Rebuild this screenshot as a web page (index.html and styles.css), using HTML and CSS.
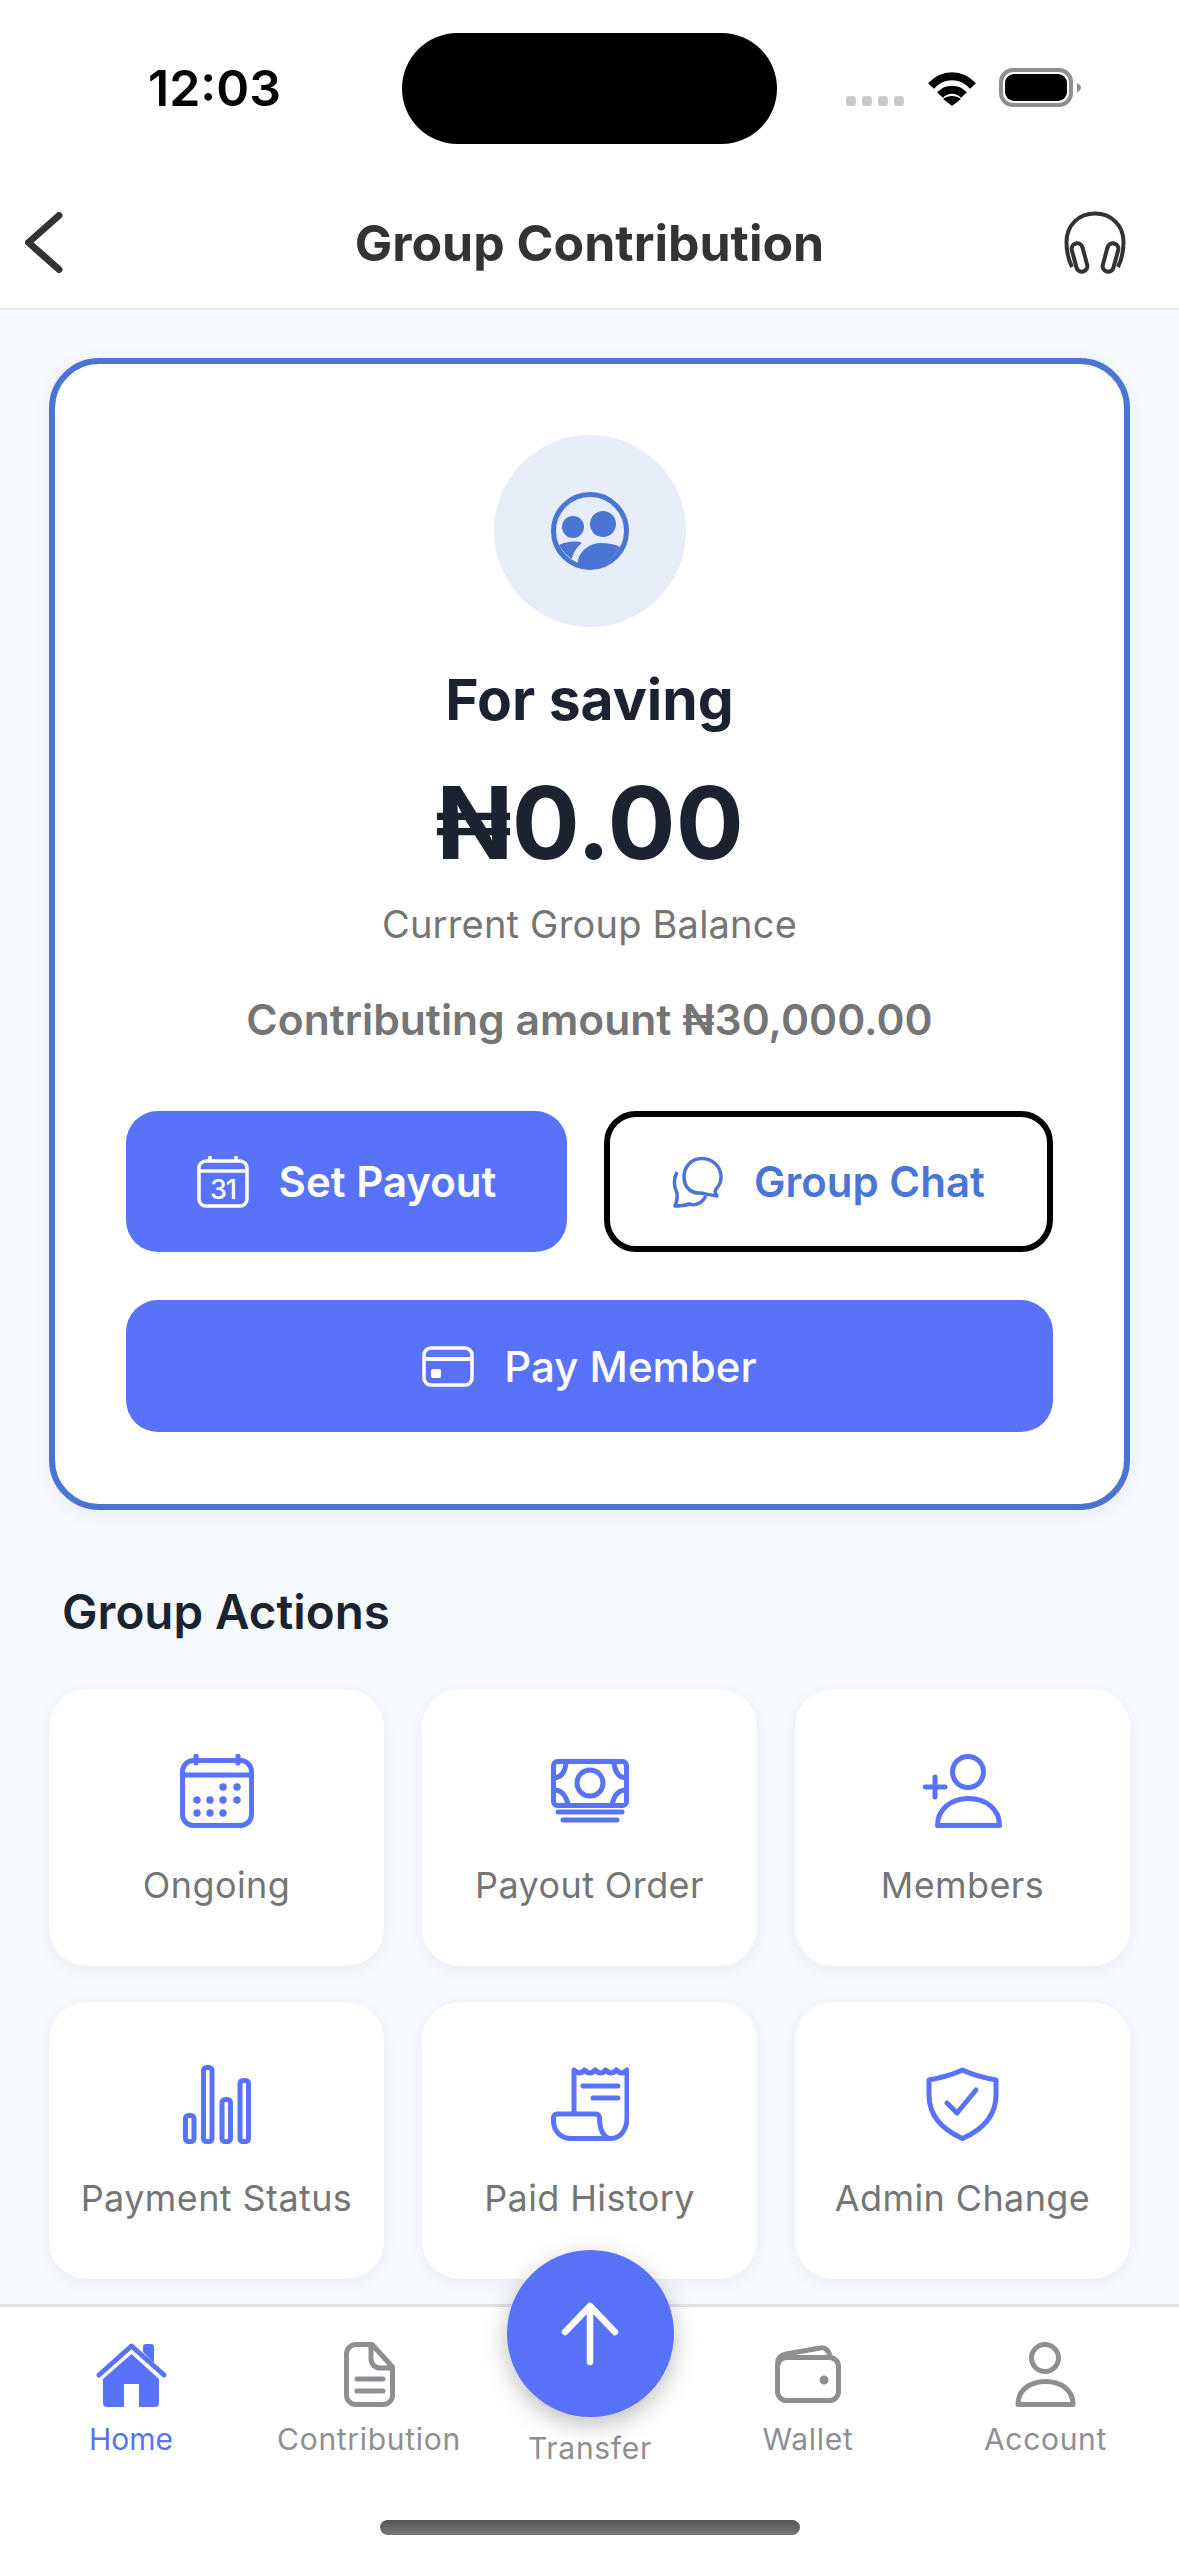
FILE: index.html
```html
<!DOCTYPE html>
<html>
<head>
    <title>Group Contribution</title>
    <link rel="stylesheet" href="styles.css">
</head>
<body>
    <div class="page">
        <div class="status">
            <span class="time">12:03</span>
            <div class="island"></div>
            <svg class="status-icons" width="236" height="39" viewBox="0 0 236 39">
                <g fill="#c9c9c9">
                    <rect x="0" y="28" width="10" height="10" rx="3"/>
                    <rect x="16" y="28" width="10" height="10" rx="3"/>
                    <rect x="32" y="28" width="10" height="10" rx="3"/>
                    <rect x="48" y="28" width="10" height="10" rx="3"/>
                </g>
                <g transform="translate(81 0)">
                    <path d="M4 18C16 5 34 5 46 18" fill="none" stroke="#000" stroke-width="8"/>
                    <path d="M13 27C20 20 30 20 37 27" fill="none" stroke="#000" stroke-width="8"/>
                    <path d="M25 38L16 31C21 27 29 27 34 31Z" fill="#000"/>
                </g>
                <rect x="155" y="2" width="70" height="35" rx="12" fill="none" stroke="#8e8e8e" stroke-width="4"/>
                <rect x="159" y="6" width="62" height="27" rx="9" fill="#000"/>
                <path d="M231 15L234 17Q236 19.5 234 22L231 25Z" fill="#8e8e8e"/>
            </svg>
        </div>

        <header class="topbar">
            <svg class="back" width="38" height="61" viewBox="0 0 38 61">
                <path d="M34 3.500L3.500 30.500L34 57.500" fill="none" stroke="#333" stroke-width="7" stroke-linecap="round" stroke-linejoin="round"/>
            </svg>
            <h1>Group Contribution</h1>
            <svg class="support" width="62" height="63" viewBox="0 0 62 63" fill="none" stroke="#333" stroke-width="4">
                <path d="M8 56C3 46 2.500 38 2.500 31C2.500 14 15 2.500 31 2.500S59.500 14 59.500 31C59.500 38 59 46 54 56"/>
                <rect x="10" y="32" width="11" height="29" rx="5.500" transform="rotate(-15 15.500 46.500)"/>
                <rect x="41" y="32" width="11" height="29" rx="5.500" transform="rotate(15 46.500 46.500)"/>
            </svg>
        </header>

        <main class="content">
            <section class="balance-card">
                <div class="group-avatar">
                    <svg width="78" height="78" viewBox="0 0 78 78" fill="#4a75d4">
                        <circle cx="39" cy="39" r="36.500" fill="none" stroke="#4a75d4" stroke-width="5"/>
                        <circle cx="22" cy="35" r="11"/>
                        <circle cx="52" cy="32" r="13"/>
                        <path d="M27 68C30 57 40 51 50 51C57 51 63 52 69 55A37 37 0 0 1 27 73Z"/>
                        <path d="M8 53C14 50 25 48 31 51C26 55 22 60 21 67A37 37 0 0 1 8 53Z"/>
                    </svg>
                </div>
                <h2 class="group-name">For saving</h2>
                <div class="amount">₦0.00</div>
                <p class="amount-label">Current Group Balance</p>
                <p class="contributing">Contributing amount ₦30,000.00</p>

                <div class="btn-row">
                    <a class="btn btn-primary">
                        <svg width="52" height="52" viewBox="0 0 52 52" fill="none" stroke="#fff" stroke-width="3.500">
                            <rect x="2" y="5" width="48" height="45" rx="7"/>
                            <path d="M2 15H50M13 0V6M39 0V6"/>
                            <text class="cal-day" x="26" y="43" text-anchor="middle">31</text>
                        </svg>
                        <span>Set Payout</span>
                    </a>
                    <a class="btn btn-outline">
                        <svg width="52" height="52" viewBox="0 0 52 52" fill="none" stroke="#4a75d4" stroke-width="3.500" stroke-linejoin="round">
                            <path d="M30 2.500C19 2.500 12 11 12 21C12 31 19 38 29 37C33 38 37 38.500 45 40C42.500 36 43 35 44 33C47 30 49 26 49 21C49 11 41 2.500 30 2.500Z"/>
                            <path d="M5 16C2 22 1.500 30 5 37C5.500 42 5 46 3 50C9 50 13 49.500 17 48C24 50 30 47 34 40"/>
                        </svg>
                        <span>Group Chat</span>
                    </a>
                </div>
                <a class="btn btn-primary btn-wide">
                    <svg width="52" height="41" viewBox="0 0 52 41" fill="none" stroke="#fff" stroke-width="3.500">
                        <rect x="2" y="2" width="48" height="37" rx="7"/>
                        <path d="M2 13H50" stroke-width="4"/>
                        <rect x="9" y="23" width="10" height="9" rx="2" fill="#fff" stroke="none"/>
                    </svg>
                    <span>Pay Member</span>
                </a>
            </section>

            <h3 class="section-title">Group Actions</h3>

            <div class="actions">
                <div class="action">
                    <div class="action-icon">
                        <svg width="74" height="74" viewBox="0 0 74 74" fill="none" stroke="#5872fa" stroke-width="5">
                            <rect x="2.500" y="6.500" width="69" height="65" rx="11"/>
                            <path d="M2.500 21H71.500"/>
                            <path d="M16 2V9M58 2V9" stroke-linecap="round"/>
                            <g fill="#5872fa" stroke="none">
                                <circle cx="43" cy="33" r="3.700"/><circle cx="57" cy="33" r="3.700"/>
                                <circle cx="17" cy="46" r="3.700"/><circle cx="30" cy="46" r="3.700"/><circle cx="43" cy="46" r="3.700"/><circle cx="57" cy="46" r="3.700"/>
                                <circle cx="17" cy="59" r="3.700"/><circle cx="30" cy="59" r="3.700"/><circle cx="43" cy="59" r="3.700"/>
                            </g>
                        </svg>
                    </div>
                    <span>Ongoing</span>
                </div>
                <div class="action">
                    <div class="action-icon">
                        <svg width="78" height="64" viewBox="0 0 78 64" fill="none" stroke="#5872fa" stroke-width="5" stroke-linecap="round">
                            <rect x="2.500" y="2.500" width="73" height="44" rx="4"/>
                            <circle cx="39" cy="24" r="13"/>
                            <path d="M3 19Q14 18 15 3M75 19Q64 18 63 3M3 31Q14 31 17 46M75 31Q64 31 61 46"/>
                            <path d="M7 53H71M12 61H66"/>
                        </svg>
                    </div>
                    <span>Payout Order</span>
                </div>
                <div class="action">
                    <div class="action-icon">
                        <svg width="79" height="74" viewBox="0 0 79 74" fill="none" stroke="#5872fa" stroke-width="5" stroke-linecap="round" stroke-linejoin="round">
                            <circle cx="45" cy="18" r="15.500"/>
                            <path d="M14.500 71.500C14.500 55 28 44.500 45.500 44.500C63 44.500 76.500 55 76.500 71.500Z"/>
                            <path d="M2 33H22M12 23V43"/>
                        </svg>
                    </div>
                    <span>Members</span>
                </div>
                <div class="action">
                    <div class="action-icon">
                        <svg width="68" height="79" viewBox="0 0 68 79" fill="none" stroke="#5872fa" stroke-width="5">
                            <rect x="2.500" y="50.500" width="8.500" height="26" rx="3"/>
                            <rect x="20.500" y="2.500" width="8.500" height="74" rx="3"/>
                            <rect x="39" y="34.500" width="8.500" height="42" rx="3"/>
                            <rect x="57" y="15.500" width="8.500" height="61" rx="3"/>
                        </svg>
                    </div>
                    <span>Payment Status</span>
                </div>
                <div class="action">
                    <div class="action-icon">
                        <svg width="78" height="74" viewBox="0 0 78 74" fill="none" stroke="#5872fa" stroke-width="5" stroke-linecap="round" stroke-linejoin="round">
                            <path d="M23 47V3q5.300 6 10.600 0q5.300 6 10.600 0q5.300 6 10.600 0q5.300 6 10.600 0q5.300 6 10.600 0V51C76 63 69 71.500 60 71.500H20C10 71.500 2.500 64 2.500 54V51C2.500 48.500 4 47 6 47H45C47 47 48.500 48.500 48.500 51C48.500 63 53 71.500 60 71.500"/>
                            <path d="M32 19H67M42 31H67"/>
                        </svg>
                    </div>
                    <span>Paid History</span>
                </div>
                <div class="action">
                    <div class="action-icon">
                        <svg width="73" height="74" viewBox="0 0 73 74" fill="none" stroke="#5872fa" stroke-width="5" stroke-linecap="round" stroke-linejoin="round">
                            <path d="M36.500 3C28 7 14 11 3 13V28C3 47 15 62 36.500 71.500C58 62 70 47 70 28V13C59 11 45 7 36.500 3Z"/>
                            <path d="M21 36L31 46L50 23"/>
                        </svg>
                    </div>
                    <span>Admin Change</span>
                </div>
            </div>
        </main>

        <nav class="tabbar">
            <div class="tabs">
                <div class="tab tab-active">
                    <div class="tab-icon">
                        <svg width="71" height="65" viewBox="0 0 71 65">
                            <path d="M47 10V5A3 3 0 0 1 50 2H55A3 3 0 0 1 58 5V21Z" fill="#5872fa"/>
                            <path d="M3 33L35.500 4L68 33" fill="none" stroke="#5872fa" stroke-width="5" stroke-linecap="round" stroke-linejoin="round"/>
                            <path d="M35.500 12L63 37V61A4 4 0 0 1 59 65H43V42H28V65H11A4 4 0 0 1 7 61V37Z" fill="#5872fa"/>
                        </svg>
                    </div>
                    <span>Home</span>
                </div>
                <div class="tab">
                    <div class="tab-icon">
                        <svg width="51" height="65" viewBox="0 0 51 65" fill="none" stroke="#8e8e93" stroke-width="5" stroke-linecap="round" stroke-linejoin="round">
                            <path d="M12 2.500H28L48.500 25V53A9.500 9.500 0 0 1 39 62.500H12A9.500 9.500 0 0 1 2.500 53V12A9.500 9.500 0 0 1 12 2.500Z"/>
                            <path d="M27 3V17A9 9 0 0 0 36 26H48"/>
                            <path d="M13 37H39M13 49H39"/>
                        </svg>
                    </div>
                    <span>Contribution</span>
                </div>
                <div class="tab tab-transfer">
                    <div class="fab">
                        <svg width="58" height="64" viewBox="0 0 58 64" fill="none" stroke="#fff" stroke-width="6.500" stroke-linecap="round" stroke-linejoin="round">
                            <path d="M29 4V60M4 30L29 4L54 30"/>
                        </svg>
                    </div>
                    <span>Transfer</span>
                </div>
                <div class="tab">
                    <div class="tab-icon">
                        <svg width="66" height="58" viewBox="0 0 66 58" fill="none" stroke="#8e8e93" stroke-width="5" stroke-linejoin="round">
                            <rect x="2.500" y="12.500" width="61" height="43" rx="9"/>
                            <path d="M3 20C2 13 6 10 11 9L45 3C50 2 54 5 55 12"/>
                            <circle cx="49" cy="35" r="4.500" fill="#8e8e93" stroke="none"/>
                        </svg>
                    </div>
                    <span>Wallet</span>
                </div>
                <div class="tab">
                    <div class="tab-icon">
                        <svg width="61" height="65" viewBox="0 0 61 65" fill="none" stroke="#8e8e93" stroke-width="5" stroke-linejoin="round">
                            <circle cx="30" cy="16" r="13.500"/>
                            <path d="M3 62.500C3 48 15 39.500 30.500 39.500C46 39.500 58 48 58 62.500Z"/>
                        </svg>
                    </div>
                    <span>Account</span>
                </div>
            </div>
            <div class="home-indicator"></div>
        </nav>
    </div>
</body>
</html>
```

FILE: styles.css
```css
* {
    box-sizing: border-box;
}

body {
    margin: 0;
    font-family: Inter, "Noto Sans", sans-serif;
    background-color: #fff;
}

svg {
    display: block;
    flex-shrink: 0;
}

.page {
    width: 1179px;
    height: 2556px;
    display: flex;
    flex-direction: column;
    overflow: hidden;
    background-color: #f5f8fc;
}

/* status bar */
.status {
    height: 179px;
    padding: 33px 0 0 148px;
    display: flex;
    align-items: flex-start;
    background-color: #fff;
}

.time {
    width: 254px;
    height: 111px;
    line-height: 111px;
    font-size: 50px;
    font-weight: 600;
    color: #000;
}

.island {
    width: 375px;
    height: 111px;
    border-radius: 56px;
    background-color: #000;
}

.status-icons {
    margin: 35px 0 0 69px;
}

/* top bar */
.topbar {
    height: 131px;
    padding: 0 25px 2px;
    display: grid;
    grid-template-columns: 1fr auto 1fr;
    align-items: center;
    background-color: #fff;
    border-bottom: 2px solid #e8e8e8;
}

.topbar h1 {
    margin: 0;
    font-size: 50px;
    font-weight: 700;
    color: #333;
}

.support {
    justify-self: end;
    margin-right: 28px;
}

/* main */
.content {
    flex: 1;
    padding: 48px 49px 0;
}

.balance-card {
    height: 1152px;
    padding: 71px 71px 0;
    border: 6px solid #4a75d4;
    border-radius: 50px;
    background-color: #fff;
    text-align: center;
    box-shadow: 0 4px 20px rgba(0, 0, 0, 0.05);
}

.group-avatar {
    width: 192px;
    height: 192px;
    margin: 0 auto;
    display: flex;
    align-items: center;
    justify-content: center;
    border-radius: 50%;
    background-color: #e7edf9;
}

.group-name {
    margin: 33px 0 0;
    font-size: 57px;
    line-height: 80px;
    font-weight: 700;
    color: #1b2230;
}

.amount {
    margin-top: 22px;
    font-size: 101px;
    line-height: 120px;
    font-weight: 700;
    color: #1b2230;
}

.amount-label {
    margin: 17px 0 0;
    font-size: 38px;
    line-height: 50px;
    letter-spacing: 0.2px;
    color: #757575;
}

.contributing {
    margin: 46px 0 0;
    font-size: 42.6px;
    line-height: 50px;
    font-weight: 600;
    color: #757575;
}

.btn-row {
    margin-top: 66px;
    display: grid;
    grid-template-columns: 441px 449px;
    column-gap: 37px;
}

.btn {
    height: 141px;
    display: flex;
    align-items: center;
    justify-content: center;
    gap: 30px;
    border-radius: 32px;
    font-size: 42px;
    font-weight: 600;
}

.btn-primary {
    background-color: #5872fa;
    color: #fff;
}

.btn-outline {
    border: 6px solid #000;
    background-color: #fff;
    color: #4a75d4;
}

.btn-wide {
    height: 132px;
    margin-top: 48px;
    font-weight: 500;
}

.cal-day {
    font-family: Inter, sans-serif;
    font-size: 27px;
    font-weight: 500;
    letter-spacing: -1px;
    fill: #fff;
    stroke: none;
}

.section-title {
    margin: 72px 0 47px 13px;
    font-size: 47.5px;
    line-height: 60px;
    font-weight: 600;
    color: #1b2230;
}

.actions {
    display: grid;
    grid-template-columns: repeat(3, 335px);
    column-gap: 38px;
    row-gap: 36px;
}

.action {
    height: 277px;
    padding-top: 62px;
    display: flex;
    flex-direction: column;
    align-items: center;
    border-radius: 38px;
    background-color: #fff;
    box-shadow: 0 4px 16px rgba(40, 60, 100, 0.05);
    font-size: 36px;
    line-height: 50px;
    letter-spacing: 0.4px;
    color: #757575;
}

.action-icon {
    height: 80px;
    margin-bottom: 29px;
    display: flex;
    align-items: center;
}

/* bottom tabs */
.tabbar {
    position: relative;
    z-index: 1;
    height: 252px;
    padding-top: 33px;
    border-top: 3px solid #e2e2e2;
    background-color: #fff;
}

.tabs {
    display: grid;
    grid-template-columns: 262px 214px 228px 208px 267px;
    height: 128px;
}

.tab {
    display: flex;
    flex-direction: column;
    align-items: center;
    font-size: 30px;
    line-height: 40px;
    letter-spacing: 0.7px;
    color: #8e8e93;
}

.tab-active {
    letter-spacing: 0;
    color: #5872fa;
}

.tab-icon {
    height: 68px;
    margin-bottom: 11px;
    display: flex;
    align-items: center;
}

.fab {
    width: 167px;
    height: 167px;
    margin-top: -90px;
    margin-bottom: 11px;
    display: flex;
    align-items: center;
    justify-content: center;
    flex-shrink: 0;
    border-radius: 50%;
    background-color: #5872fa;
    box-shadow: 0 8px 24px rgba(0, 0, 0, 0.25);
}

.home-indicator {
    width: 420px;
    height: 15px;
    margin: 52px auto 0;
    border-radius: 8px;
    background: linear-gradient(#555, #777);
}
```
